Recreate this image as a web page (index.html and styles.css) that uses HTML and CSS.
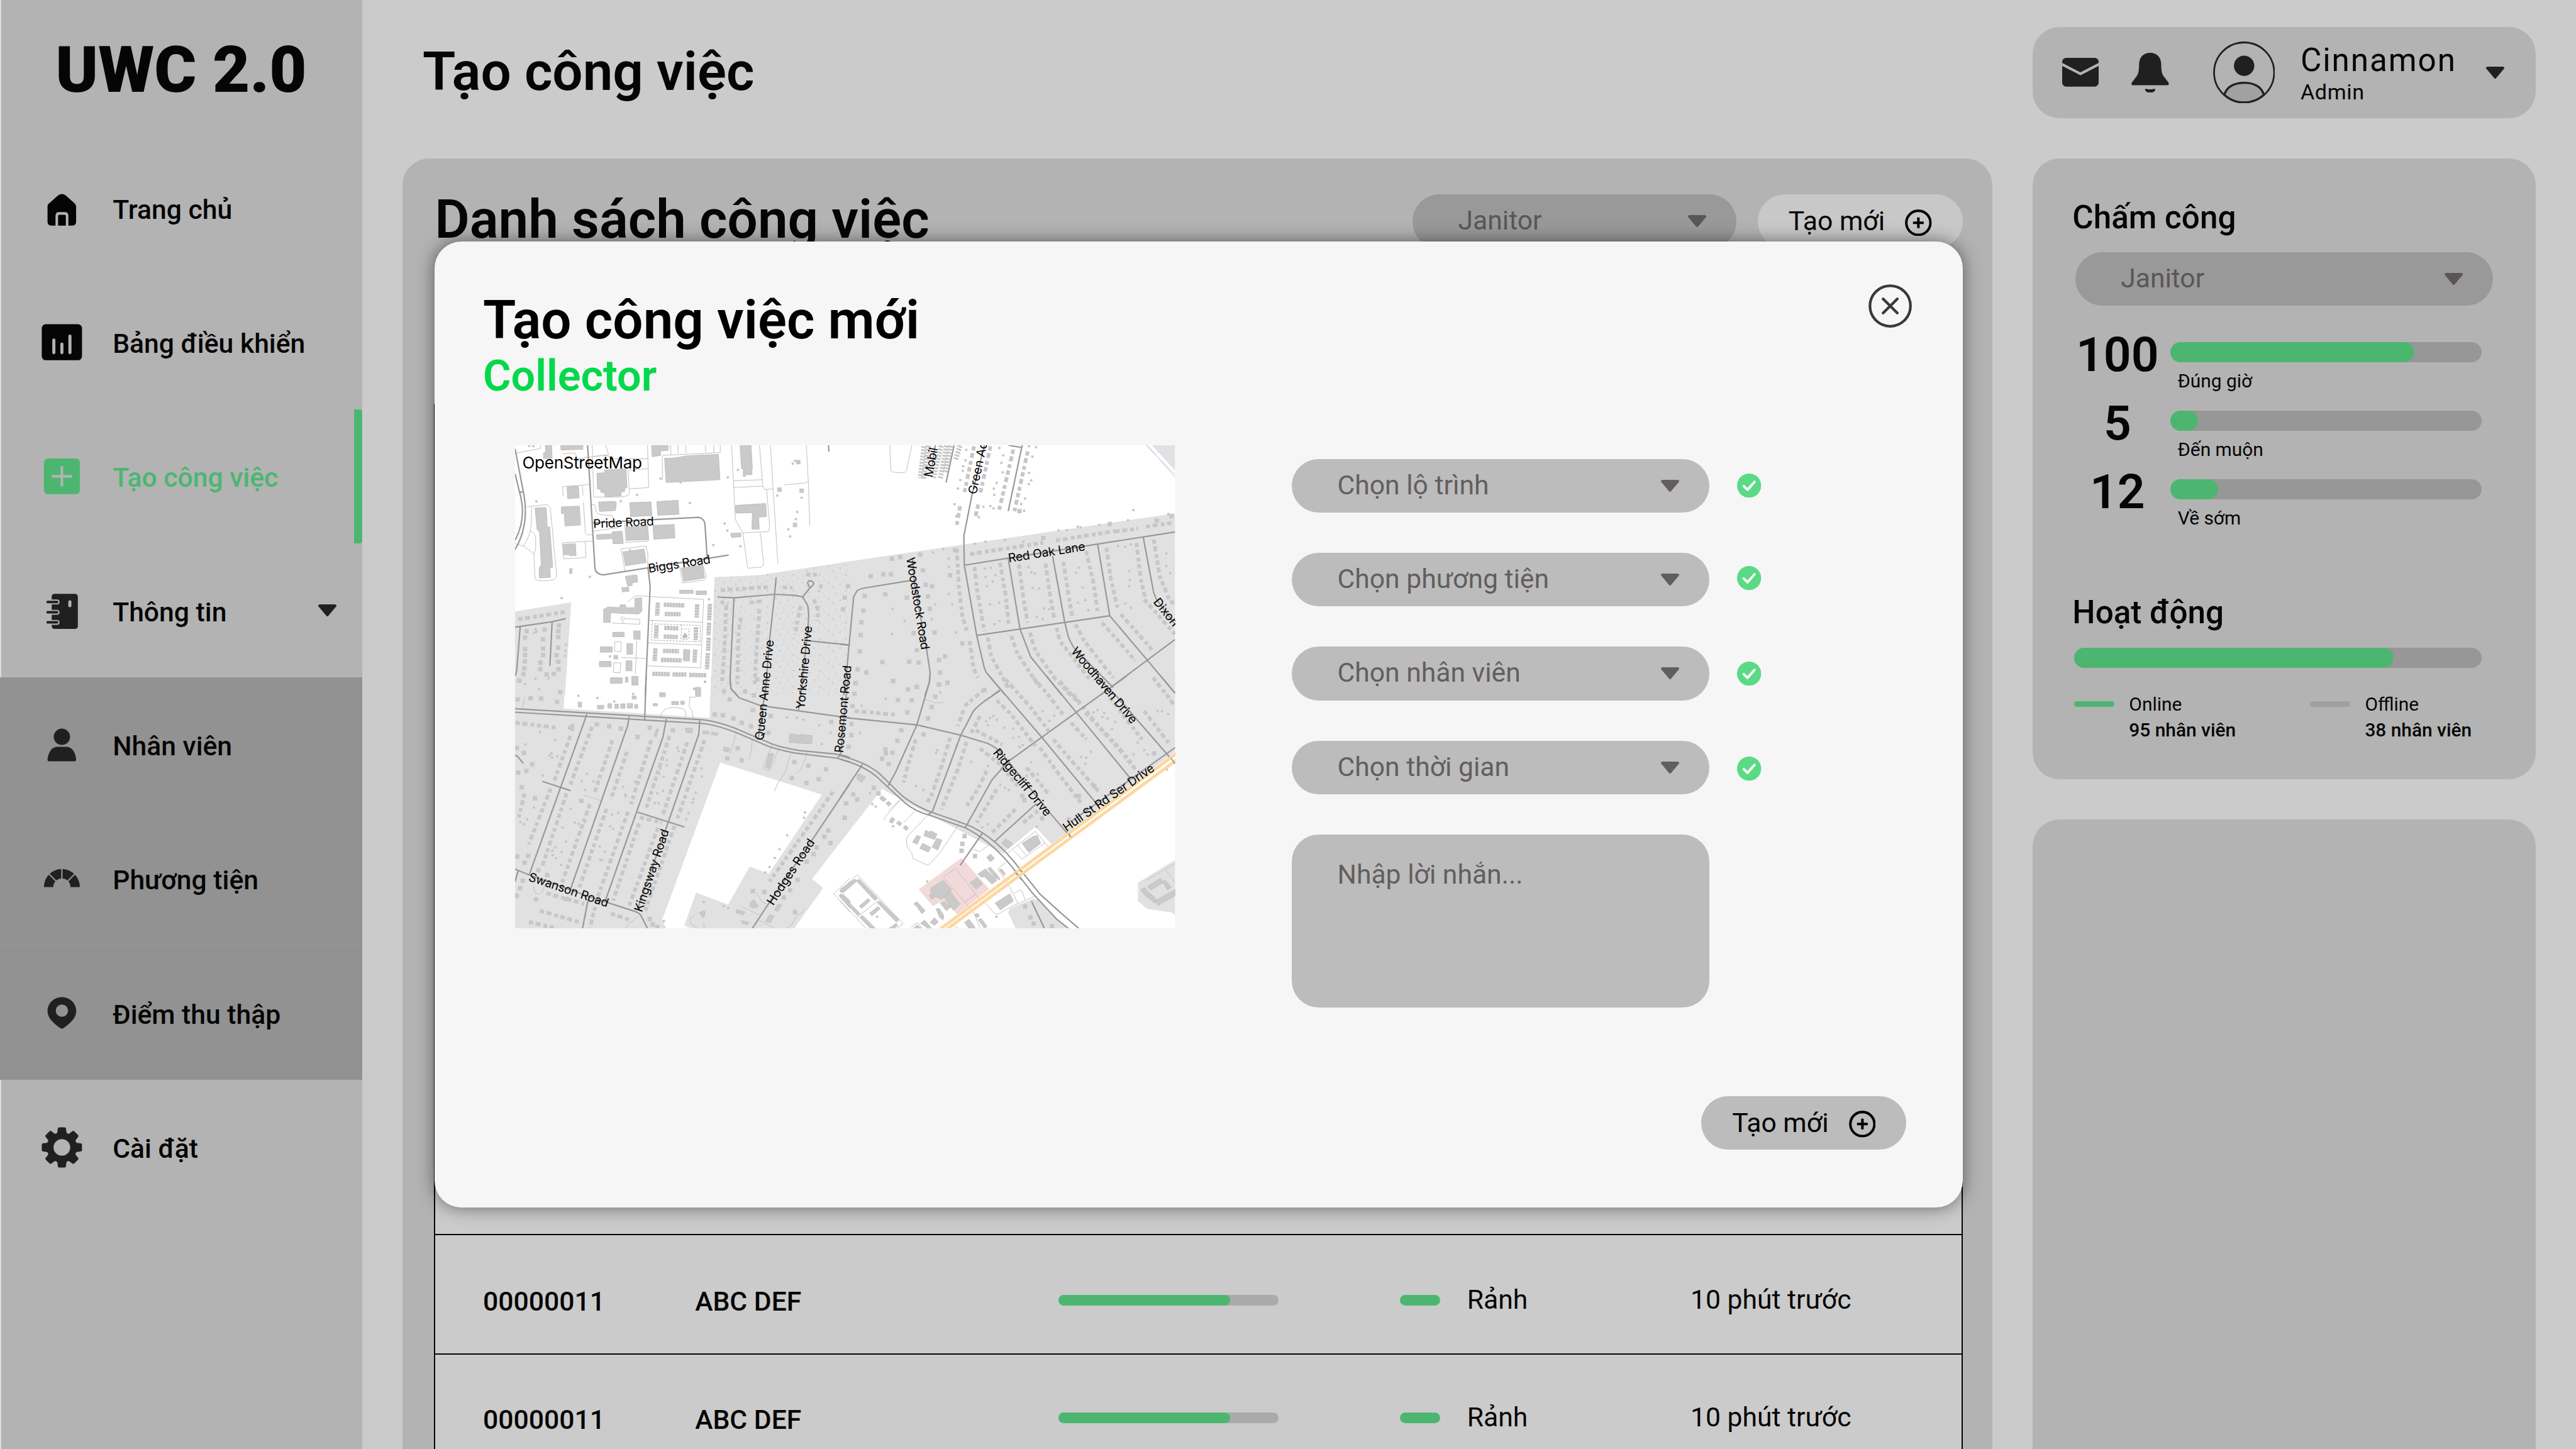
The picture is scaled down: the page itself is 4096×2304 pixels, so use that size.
FILE: index.html
```html
<!DOCTYPE html>
<html lang="vi">
<head>
<meta charset="utf-8">
<title>UWC 2.0 – Tạo công việc</title>
<link rel="stylesheet" href="styles.css">
</head>
<body>
<svg class="defs" aria-hidden="true">
  <symbol id="caret" viewBox="0 0 13.6 9"><path d="M1 0h11.6q1.4.3.8 1.5L7.5 8.6q-.7.7-1.4 0L.2 1.5Q-.4.3 1 0z"/></symbol>
  <symbol id="plus-circle" viewBox="0 0 20 20"><path d="M10 1a9 9 0 1 0 0 18a9 9 0 1 0 0-18zM10 6v8M6 10h8" fill="none" stroke="currentColor" stroke-width="1.9"/></symbol>
  <symbol id="check" viewBox="0 0 18 18"><circle cx="9" cy="9" r="9"/><path d="M5 9.3l2.8 2.8L13 6.2" fill="none" stroke="#f6f6f6" stroke-width="1.9" stroke-linecap="round" stroke-linejoin="round"/></symbol>
</svg>

<div class="app">
  <aside class="sidebar">
    <div class="logo">UWC 2.0</div>
    <nav>
      <a class="nav-item">
        <svg class="nav-icon ink" viewBox="0 0 36 36"><path d="M10 31.3q-2.7 0-2.7-3V17q0-1.6 1.4-2.5l6.3-5.6q3-2.3 6 0l6.3 5.6q1.3 1 1.3 2.5v11.3q0 3-2.7 3z"/><path class="cut-line" d="M14.2 31.6V24q0-1.8 1.8-1.8h4q1.9 0 1.9 1.8v7.6"/></svg>
        <span>Trang chủ</span>
      </a>
      <a class="nav-item">
        <svg class="nav-icon ink" viewBox="0 0 36 36"><rect x="3" y="4.5" width="30" height="26.8" rx="3"/><path class="cut-bar" d="M12 16.3v9.4M18 19.3v6.4M24 13.3v12.4"/></svg>
        <span>Bảng điều khiển</span>
      </a>
      <a class="nav-item active">
        <svg class="nav-icon" viewBox="0 0 36 36"><rect x="4.6" y="4.7" width="26.8" height="26.6" rx="3"/><path class="cut-line" d="M18 10.4v15.2M10.4 18h15.2"/></svg>
        <span>Tạo công việc</span>
      </a>
      <a class="nav-item">
        <svg class="nav-icon" viewBox="0 0 36 36"><rect x="10.4" y="5.8" width="19.5" height="26.1" rx="2"/><path class="ring-gap" d="M7.4 11.8h7M7.4 19.5h7M7.4 27h7"/><path class="ring" d="M7.4 11.8h7M7.4 19.5h7M7.4 27h7"/><rect class="cut" x="22.8" y="10.6" width="2.3" height="5.1" rx="1.1"/></svg>
        <span>Thông tin</span>
        <svg class="caret"><use href="#caret"/></svg>
      </a>
      <div class="submenu">
        <a class="nav-item">
          <svg class="nav-icon" viewBox="0 0 36 36"><circle cx="18" cy="12" r="6.1"/><path d="M8.6 30.2q-1.5 0-1.3-1.6Q8.6 19.4 15 19.4h6q6.4 0 7.6 9.2.2 1.6-1.2 1.6z"/></svg>
          <span>Nhân viên</span>
        </a>
        <a class="nav-item">
          <svg class="nav-icon" viewBox="0 0 36 36"><path d="M4.6 24.1A13.4 13.4 0 0 1 31.4 24.1H24.4A6.4 6.4 0 0 0 11.6 24.1z"/><path class="gap-dark" d="M18 10v9M8.2 14.2l5.8 5.8M27.8 14.2l-5.8 5.8"/></svg>
          <span>Phương tiện</span>
        </a>
        <a class="nav-item">
          <svg class="nav-icon" viewBox="0 0 36 36"><path fill-rule="evenodd" d="M18 6.3c6 0 10.7 4.6 10.7 10.4 0 5.300-4.700 9.300-9.700 12.800q-1 .6-2 0c-5-3.500-9.700-7.500-9.700-12.800C7.300 10.900 12 6.300 18 6.300zm0 5.500a4.600 4.600 0 1 0 0 9.200a4.600 4.600 0 1 0 0-9.200z"/></svg>
          <span>Điểm thu thập</span>
        </a>
      </div>
      <a class="nav-item">
        <svg class="nav-icon" viewBox="0 0 36 36">
          <circle cx="18" cy="18" r="8.7" fill="none" stroke="currentColor" stroke-width="5"/>
          <g id="teeth"><path d="M13.600 8.400l1-1.600.4-3q.1-.8 1-.8h4q.9 0 1 .8l.4 3 1 1.600zM13.600 27.600l1 1.600.4 3q.1.8 1 .8h4q.9 0 1-.8l.4-3 1-1.600z"/></g>
          <use href="#teeth" transform="rotate(45 18 18)"/><use href="#teeth" transform="rotate(90 18 18)"/><use href="#teeth" transform="rotate(135 18 18)"/>
        </svg>
        <span>Cài đặt</span>
      </a>
    </nav>
  </aside>

  <main class="main">
    <h1 class="page-title">Tạo công việc</h1>
    <section class="panel">
      <header class="panel-head">
        <h2>Danh sách công việc</h2>
        <div class="select dark short"><span>Janitor</span><svg class="caret"><use href="#caret"/></svg></div>
        <button class="btn light"><span>Tạo mới</span><svg><use href="#plus-circle"/></svg></button>
      </header>
      <div class="table">
        <div class="row">
          <b>00000011</b><b>ABC DEF</b>
          <div class="bar thin"><i style="width:78%"></i></div>
          <div class="status"><i></i><span>Rảnh</span></div>
          <span class="time">10 phút trước</span>
        </div>
        <div class="row last">
          <b>00000011</b><b>ABC DEF</b>
          <div class="bar thin"><i style="width:78%"></i></div>
          <div class="status"><i></i><span>Rảnh</span></div>
          <span class="time">10 phút trước</span>
        </div>
      </div>
    </section>
  </main>

  <div class="rail">
    <section class="card user">
      <svg class="mail" viewBox="0 0 27.200 21.400"><rect width="27.200" height="21.400" rx="3"/><path class="cut-line" d="M-.5 4.600l14.100 7.300 14.100-7.300"/></svg>
      <svg class="bell" viewBox="0 0 28 29.700"><path d="M14 0c5 0 8 3.200 8.200 8 .2 5 .3 7.300 1.800 9.400l3.700 4.900q.8 1.600-.9 1.900H1.200q-1.700-.3-.9-1.900L4 17.400c1.500-2.100 1.600-4.400 1.800-9.400C6 3.200 9 0 14 0zM10.200 27.600q0-1.200 1.300-.7 2.500.6 5 0 1.300-.5 1.300.7-.6 2.100-3.800 2.100t-3.800-2.100z"/></svg>
      <svg class="avatar" viewBox="0 0 46.200 46.200"><path d="M8.400 39.800C10 33.500 16 30.800 23.100 30.800s13.100 2.700 14.700 9A22 22 0 0 1 8.400 39.800z" fill="#9fa2a1" stroke="#202020" stroke-width="1.500"/><circle cx="23.100" cy="23.100" r="22.400" fill="none" stroke="#202020" stroke-width="1.300"/><circle cx="23.100" cy="18.100" r="7.600"/></svg>
      <div class="who"><div class="name">Cinnamon</div><div class="role">Admin</div></div>
      <svg class="caret"><use href="#caret"/></svg>
    </section>
    <section class="card stats">
      <h3>Chấm công</h3>
      <div class="select dark"><span>Janitor</span><svg class="caret"><use href="#caret"/></svg></div>
      <div class="counts">
        <div class="count"><strong>100</strong><div><div class="bar"><i style="width:78.400%"></i></div><p>Đúng giờ</p></div></div>
        <div class="count"><strong>5</strong><div><div class="bar"><i style="width:8.900%"></i></div><p>Đến muộn</p></div></div>
        <div class="count"><strong>12</strong><div><div class="bar"><i style="width:15.300%"></i></div><p>Về sớm</p></div></div>
      </div>
      <h3>Hoạt động</h3>
      <div class="bar activity"><i style="width:78.300%"></i></div>
      <div class="legend">
        <div><i class="on"></i><p>Online<br><b>95 nhân viên</b></p></div>
        <div><i></i><p>Offline<br><b>38 nhân viên</b></p></div>
      </div>
    </section>
    <section class="card blank"></section>
  </div>
</div>

<div class="modal">
  <header class="modal-head">
    <div><h2>Tạo công việc mới</h2><p>Collector</p></div>
    <svg class="close" viewBox="0 0 32.400 32.400"><path d="M16.200 1.100a15.100 15.100 0 1 0 0 30.200a15.100 15.100 0 1 0 0-30.200zM10.900 10.900l10.600 10.600M21.500 10.900L10.900 21.500" fill="none" stroke="#38393b" stroke-width="2" stroke-linecap="round"/></svg>
  </header>
  <div class="modal-body">
    <svg class="map" viewBox="0 0 1366.700 1000" preserveAspectRatio="none">
      <defs>
        <pattern id="lots" width="118" height="96" patternUnits="userSpaceOnUse">
          <path class="lot" d="M8 12h6v7h-6zM34 5h4v4h-4zM51 22h9v7h-9zM83 10h5v6h-5zM104 31h8v8h-8zM20 42h5v4h-5zM41 55h4v5h-4zM70 47h8v9h-8zM93 62h4v4h-4zM11 71h9v8h-9zM58 80h5v5h-5zM86 84h7v6h-7zM30 87h4v4h-4zM112 78h3v4h-3zM66 70h3v3h-3z"/>
        </pattern>
      </defs>
      <rect width="1366.700" height="1000" fill="#fff"/>

      <!-- residential ground -->
      <g id="ground">
        <g transform="translate(-26.600 -22) scale(.4592 .3444)"><path d="M58 1063L311 1008 283 1568H58zM957 857L1150 846 1568 762V1568H940z"/></g>
        <g transform="translate(673.400 -22) scale(.4592 .3444)"><path d="M0 770L1509 473V1568H0zM1405 64H1509V215z"/></g>
        <g transform="translate(-26.600 478) scale(.4592 .3444)"><path fill-rule="evenodd" d="M58 0H286L277 195 935 250 941 0H1568V925L1397 1219 1447 1274 1317 1516H850L821 1500 874 1301 1018 1374 1116 1144 1202 1188 1442 712 983 519 721 1465 740 1516H58z"/></g>
        <g transform="translate(673.400 478) scale(.4592 .3444)"><path d="M0 0H1509V455L952 1010 880 905 733 1067 188 679 0 999zM756 1420L765 1395 870 1338 890 1345 1020 1516H790zM1342 1242L1509 1105V1440L1495 1420 1384 1399 1342 1352z"/></g>
      </g>

      <!-- north-west quarter -->
      <g transform="translate(-26.600 -22) scale(.4592 .3444)">
        <path fill="url(#lots)" d="M957 857L1150 846 1568 762V1568H940z"/>
        <path class="parcel" d="M58 112L173 84V64M273 115L328 110 340 145 480 120 467 64M406 64L412 375H530Q574 372 574 350L567 215 660 204M410 130L470 125 505 145 658 145M655 64L661 318 575 326M275 368L273 312 395 300M361 305L365 365M722 270L722 125 983 108V64M760 64V120M793 64V115M827 64L829 112M917 64V108M954 64V108M1034 64L1051 510 1085 590 1200 583Q1206 570 1205 540L1192 330M1160 64L1175 310 1185 330 1220 326M1042 278L1172 271M1044 318L1175 309M1209 64L1243 776M1085 592L1107 803 1170 796Q1178 790 1178 770L1164 590M1272 302L1365 290 1380 280 1371 64M1380 280L1387 548M112 433L200 421Q216 425 218 455L245 840Q245 875 215 877L165 878Q147 876 147 850L143 718 100 672 58 655M126 580Q150 590 151 620V690L143 718M132 433V530Q125 620 93 675M366 408L375 590 385 602H410M403 420L418 421 424 465Q430 482 460 483L495 488 520 560 410 580M272 650L408 640M272 650L278 747 378 738 374 644M552 530L558 648 655 641Q661 640 660 620L655 545M535 687L649 670 657 720 655 795M535 687L554 820M800 790L813 892 910 875Q920 870 919 850L905 785M565 1008Q590 970 615 968L662 973 908 990 895 1402 655 1390M662 1116L903 1128M659 1252L898 1264M495 1133L620 1140V1110L555 1106M543 1116V1136M536 1340L650 1345M607 1240L600 1440M508 1245H537L534 1305 506 1302zM503 1372H535L531 1432 502 1430z"/>
        <path class="parcel dash" d="M677 1118L672 1235 893 1246V1148L677 1137M808 1143L806 1240M808 1168H843L841 1230H808"/>
        <path class="building" d="M194 64H223L225 143H186V108H196zM264 64H364V88L265 93zM673 64H748V95L714 98V125L676 133zM732 142L776 140 830 128 880 124 975 119 982 271 739 288zM1072 64H1122L1128 203H1126V240L1097 241V251H1087V206H1079zM427 232L461 229V212L558 206 563 318 552 325V342L536 345V368L463 374V352L444 346V330L429 326zM292 315L344 310 347 380 295 385zM266 434L348 430 353 543 283 549 280 475H267zM148 441L198 438 203 555H214L228 797 215 800 217 858 168 862 166 803 176 780 168 585 157 570zM434 405L508 401 515 410 510 456 439 462zM575 409L671 404 675 487 579 493zM697 402L793 395 797 479 701 485zM425 602L496 597V584L541 581 546 654 499 656V625L427 630zM558 556L655 548 660 631 561 636zM680 546L775 540 779 621 683 629zM273 659L330 656 333 727 304 728V722H275zM544 705L573 700 576 687 583 698 640 687 649 770 556 788zM808 802L903 783 912 862 818 882zM555 852L607 843 611 886 586 890V907L566 911zM538 920L569 917 572 941 543 946zM1051 425L1188 414 1192 492 1156 496 1159 568H1126V548L1128 469 1054 472zM1030 594L1076 590V614L1034 618zM304 805H315V835H304zM457 1050L477 1036 531 1040V1023H557V1040L598 1040V985L628 980 630 1060 615 1078 540 1075 489 1070 487 1130 457 1128zM498 1188H550V1215H498zM592 1180H622V1230H594zM442 1276H496V1308H442zM562 1256H588V1320H562zM438 1363H491V1395H438zM558 1360H585V1420H558zM488 1462H540V1494H488zM584 1453H612V1505H585zM555 1458H567V1488H555zM818 1292L846 1294 844 1361 817 1360zM872 1521H894V1568H872zM710 1552H735V1568H710zM800 935H861V955H800zM874 940H921V962H874z"/>
        <path class="terrace" d="M728 1022L822 1027M733 1078L804 1080M731 1162L795 1165M728 1214L793 1217M725 1300L797 1302M716 1354L810 1357M677 1438L757 1440M768 1442L830 1442M843 1444L921 1447M702 1010L698 1088M879 1020L877 1100M696 1146L693 1224M874 1157L872 1236M691 1284L687 1362M870 1292L867 1370M937 1018L933 1116M933 1130L930 1207M931 1220L928 1300M927 1313L923 1410"/>
        <circle class="parcel" cx="543" cy="1105" r="9"/>
        <path class="pool" d="M812 1215L824 1190 837 1212 830 1224H815z"/>
        <path class="dot" d="M154 401h0M608 363h0M714 264h0M804 287h0M535 400h0M846 411h0M1017 257h0M1063 212h0M1003 535h0M1015 577h0M952 664h0M1074 671h0M395 855h0M268 983h0M932 990h0M1350 380h0M1330 465h0M1324 508h0M1290 570h0M1298 612h0M486 1333h0M915 1486h0M866 1529h0M1310 174h0M1320 157h0M122 68h0M141 70h0M1240 366h0M145 1190h0M155 1185h0M150 1170h0M285 1300h0M283 1330h0M288 1262h0M165 1530h0M103 1500h0M150 1467h0M210 1465h0"/>
        <path class="house" d="M1335 165h0M1250 330h0M1350 337h0M1320 543h0M512 1338h0M110 1182h0M191 1172h0M184 1230h0M184 1285h0M184 1325h0M172 1370h0M172 1410h0M200 1442h0M232 1438h0M254 1410h0M253 1365h0M245 1327h0M252 1280h0M253 1217h0M253 1182h0M256 1147h0M103 1220h0M103 1290h0M103 1325h0M102 1363h0M99 1405h0M96 1440h0M77 1478h0"/>
        <path class="row-h" d="M72 1110L292 1064M985 935L1210 915M1265 918L1310 920M985 1000L1010 1025 1005 1190 1000 1330 990 1500M1075 1100L1065 1200 1060 1500M1115 1010L1175 1000M1160 1050L1145 1330 1138 1500M1405 990L1425 1060 1420 1120M1345 1030L1330 1130 1320 1200M1440 900L1425 945M1370 842L1420 842"/>
        <path class="road" d="M58 85L95 343Q125 540 58 690M58 235L78 345Q112 500 58 635M78 345H95M385 64L418 805Q423 840 455 843L1021 724M408 530L885 497Q912 503 914 540L924 738M657 800L667 910 645 1568M58 1157L225 1125 287 1106M225 1125L215 1390M81 1155L66 1410Q63 1440 58 1450M970 976L1045 981 1228 960 1312 965 1355 975 1378 1030 1382 1085 1378 1170 1345 1568M1355 975L1388 920Q1370 890 1382 880 1400 876 1405 895 1400 910 1388 920M1235 858L1228 960 1205 1240 1185 1568M1045 981L1027 1470 1031 1527 1060 1568M1393 1241L1568 1265M1471 64L1473 102"/>
      </g>

      <!-- north-east quarter -->
      <g transform="translate(673.400 -22) scale(.4592 .3444)">
        <path class="parcel" d="M223 64L228 215Q230 226 245 226L280 229Q296 232 300 205L323 64"/>
        <path class="creek" d="M1378 64L1509 240M1385 64L1509 255"/>
        <path class="trailer" d="M378 70L360 262M398 66L375 265M455 66L420 262M480 66L450 268M497 66L472 225M540 66L520 152"/>
        <path class="row-h" d="M603 70L560 345M677 70L630 360M780 90L715 460M845 100L785 460M540 430L525 545M622 420L610 490M585 718L915 650M972 636L1240 580M1240 582L1342 566M1378 553L1500 530M525 685L535 920 550 1090 570 1180M583 1240L600 1400 620 1460M605 795L615 920 640 1110 650 1180M720 770L745 960 760 1150M805 780L825 980 845 1130M925 775L945 960 965 1110M1005 765L1025 930 1045 1090M1108 700L1140 880 1160 1060M1200 680L1220 870 1250 1040M1335 650L1355 870 1380 1010M1413 630L1440 850 1480 980 1509 1030M665 1220L680 1330 760 1530M770 1210L800 1320 900 1520M855 1190L880 1300 970 1470 1040 1568M975 1160L990 1240 1130 1480M1060 1140L1100 1240 1230 1460M1180 1130L1240 1220 1330 1360M1265 1080L1410 1300M1370 990L1509 1200"/>
        <path class="house" d="M232 746h0M270 736h0M360 722h0M373 815h0M137 850h0M194 840h0M228 840h0M35 912h0M20 980h0M110 970h0M203 960h0M300 980h0M385 902h0M413 912h0M395 972h0M403 1047h0M104 1058h0M12 1050h0M95 1128h0M92 1205h0M88 1303h0M330 1193h0M425 1190h0M310 1365h0M354 1370h0M345 1295h0M445 1355h0M472 1332h0M450 1430h0M78 1412h0M117 1430h0M190 1367h0M68 1493h0M238 1480h0M345 1516h0M483 1491h0M445 1502h0M517 693h0M495 846h0M808 460h0M915 622h0M1215 537h0M1493 490h0M1427 517h0M650 1535h0M550 1255h0"/>
        <path class="dot" d="M515 418h0M523 490h0M530 324h0M541 273h0M552 218h0M554 190h0M564 155h0M568 91h0M705 290h0M692 325h0M694 362h0M677 430h0M691 443h0M645 433h0M625 497h0M732 226h0M726 170h0M735 124h0M717 80h0M866 132h0M882 75h0M851 70h0M851 230h0M850 297h0M861 275h0M833 384h0M816 417h0M829 458h0M1321 454h0M1297 515h0M1168 543h0M1083 557h0M1070 553h0M984 576h0M1021 573h0M742 634h0M655 643h0M606 656h0M464 688h0M417 708h0M825 645h0M1479 477h0M488 744h0M489 795h0M489 958h0M505 1020h0M427 1020h0M652 806h0M678 800h0M655 857h0M700 845h0M662 912h0M687 883h0M675 1020h0M716 1010h0M695 1140h0M718 1120h0M862 828h0M878 835h0M848 795h0M867 922h0M895 925h0M918 1045h0M940 1050h0M885 1095h0M912 1108h0M1063 830h0M1075 800h0M1092 918h0M1072 1010h0M1105 995h0M1118 1055h0M1252 670h0M1285 675h0M1310 660h0M1303 820h0M1305 875h0M1302 912h0M1285 1015h0M1310 1040h0M1470 715h0M1470 790h0M1487 833h0M232 1198h0M235 1048h0M290 1120h0M412 1110h0M520 1190h0"/>
        <path class="road" d="M820 64L757 460M513 64L477 288M757 64L816 77M428 64L415 180M650 64L594 360 557 608 559 785 615 1207 648 1395Q655 1430 665 1440L745 1568M559 785L755 743 1160 658 1509 585M757 745L810 1168 858 1335 1000 1568M957 730L1012 1128 1028 1215 1038 1245 1055 1285 1230 1520M1160 658L1215 1089 1509 1553M1366 618L1413 950 1425 990 1509 1140M615 1207L1215 1089M1509 1232L1170 1568M320 876L108 922Q80 930 75 940L60 975 30 1400 15 1568M325 740L335 900 390 1300 405 1430 402 1485 382 1568M0 1260L35 1265M718 1537L685 1568"/>
      </g>

      <!-- south-west quarter -->
      <g transform="translate(-26.600 478) scale(.4592 .3444)">
        <path class="parcel" d="M101 130L92 190M713 245Q720 190 770 188 825 190 827 215V250M872 126H846L843 185 855 205 860 253M1055 345L1028 470M1127 385Q1125 470 1111 497M1217 410L1176 550Q1185 570 1208 565L1235 470 1253 425M1300 465L1277 575 1240 650 1227 692M1372 455V475Q1350 570 1327 585M367 714L443 748M143 1260Q140 1310 165 1310 185 1305 190 1260M616 1440L570 1490 560 1516M1145 1300L1170 1355 1190 1370M1080 1386L1165 1440M1155 1465L1228 1516M868 1441Q840 1450 850 1490L880 1516M908 1485L911 1516M1362 1400L1350 1425 1330 1435 1308 1490 1283 1516M1568 1215L1495 1308 1568 1420"/>
        <path class="building" d="M710 103L735 100V124H710zM764 152H795V172H764zM805 150H821V170H805zM680 165H700V178H680zM872 68H894V122H872zM489 10H541V42H489zM584 2H612V52H585zM586 120H604V138H586zM342 156H358V186H342zM429 175H458V197H429zM476 165H493V192H476zM508 168H524V194H508zM534 166H554V193H534zM564 165H588V192H564zM597 170H611V193H597zM1296 346L1342 355 1346 350 1398 358 1395 407 1294 398zM1203 466L1224 468 1205 556 1187 550zM685 360L695 318H705L695 366zM300 300L322 288V328H308V318H297zM826 312L858 315 855 342 828 336zM905 330L932 332V347H905zM945 335L974 345 968 358 942 350zM1000 425L1028 435 1020 455 997 448zM1117 1365L1135 1342 1155 1385 1135 1395 1117 1385zM1243 1370L1260 1375 1243 1415 1228 1405zM1205 1435L1225 1440 1210 1483 1188 1475zM1057 1403L1095 1418 1085 1435 1055 1422zM1078 1470L1113 1480 1105 1495 1080 1485zM888 1420L912 1410 914 1440 905 1452zM1568 1245L1540 1300 1522 1292 1568 1240zM1518 1320L1535 1310 1568 1350V1395z"/>
        <path class="row-h" d="M60 280L245 310M307 360L235 628M218 675L120 1010M405 305L305 660M290 705L180 1145M497 385L415 705M395 770L270 1240M562 455L490 740M470 798L345 1280M672 385L580 770M567 815L430 1330 395 1516M754 360L650 790M617 885L500 1350M834 398L725 830M702 910L570 1390M912 385L880 510 790 855M777 900L645 1410M1492 695L1205 1235M170 1410L350 1480M120 1478L245 1516M200 1305L370 1370M490 1428L575 1465M620 850L720 880M100 705L75 850"/>
        <path class="house" d="M77 28h0M70 140h0M128 133h0M175 135h0M247 155h0M262 97h0M427 290h0M482 302h0M535 315h0M610 365h0M665 310h0M770 325h0M135 530h0M109 570h0M72 580h0M88 668h0M148 735h0M117 1080h0M101 1122h0M68 1085h0M97 462h0M66 432h0M357 750h0M163 1167h0M203 1195h0M152 1342h0M80 1275h0M93 1230h0M66 1320h0M288 1340h0M1062 433h0M1080 506h0M1015 495h0M1318 517h0M1380 538h0M1460 560h0M1306 612h0M1427 620h0M1372 642h0M1484 275h0M1130 205h0M1042 255h0M995 235h0M958 230h0M1080 280h0M1122 302h0M1210 240h0M1200 340h0M1550 765h0M1544 850h0M1470 928h0M1452 965h0M1480 1003h0M1418 1030h0M1403 1070h0M1372 1115h0M1332 1225h0M1298 1287h0M1270 1330h0M1320 1418h0M1182 1297h0M1130 1293h0M665 1460h0M678 1492h0M700 1508h0M1000 90h0M1025 140h0M1095 92h0M1135 115h0M1150 20h0"/>
        <path class="dot" d="M1365 819h0M1361 851h0M1285 957h0M1250 1040h0M1229 1093h0M1205 1147h0M1186 1180h0M429 131h0M343 118h0M505 153h0M590 107h0M866 76h0M915 33h0M908 1359h0M998 1381h0M1019 1395h0M729 1472h0M170 337h0M240 383h0M104 411h0M182 597h0M222 465h0M225 490h0M213 478h0M248 483h0M358 630h0M382 587h0M412 633h0M373 683h0M143 790h0M97 890h0M112 862h0M82 878h0M328 880h0M308 798h0M345 888h0M372 877h0M272 910h0M288 995h0M240 1030h0M226 1050h0M268 1058h0M228 1076h0M243 1095h0M265 1135h0M487 903h0M500 918h0M495 832h0M523 822h0M440 1025h0M462 1055h0M441 1102h0M450 1107h0M555 712h0M557 722h0M598 635h0M545 665h0M742 505h0M742 535h0M712 555h0M728 605h0M708 587h0M725 690h0M700 705h0M688 762h0M705 764h0M790 430h0M795 450h0M898 555h0M900 603h0M872 700h0M862 738h0M858 760h0M840 825h0M830 860h0M1283 248h0M1328 250h0M1358 262h0M1430 295h0M1480 340h0M1440 408h0"/>
        <path class="road" d="M649 0L642 268M1195 0L1155 370M1358 0L1335 210M1027 0L1031 75 1068 130 1165 177 1520 243 1568 250M1560 0L1525 470 1513 490M58 196L900 262Q960 268 1050 313L1215 407Q1260 430 1340 447L1500 468Q1540 475 1568 490M58 217L910 285Q970 295 1060 342L1200 422Q1250 445 1320 462L1510 493 1568 517M382 228L122 1193M573 243L565 300 308 1280M740 257L725 365 465 1350M891 262L886 350 748 880 610 1400M181 633L308 688M610 818L822 907M58 475L70 483 95 525M58 1160L122 1195 390 1325 600 1415Q620 1425 625 1438L655 1516M72 1170L58 1235M388 1340L362 1516M1568 645L1395 990 1200 1370 1128 1516"/>
      </g>

      <!-- south-east quarter -->
      <g transform="translate(673.400 478) scale(.4592 .3444)">
        <path class="pink" d="M546 1092L672 1280 527 1432 468 1345 418 1383 353 1282z"/>
        <path class="parcel" d="M381 139L428 160H465M275 738L197 855Q197 862 202 865M268 745L217 808M340 805L287 880M397 832L320 940Q298 960 298 1000 300 1035 322 1060L326 1095 390 1135Q400 1138 408 1122L450 1060 540 880M600 1040L630 1055 668 1015M752 1065L880 933 940 1030M800 1017L840 1080M780 1045L820 1100 922 1003M520 1155L465 1208 605 1430 630 1516M520 1155L625 1335M560 1358L612 1310M745 1120L710 1160 765 1270 800 1365M655 1365L685 1410Q700 1440 715 1428L770 1385 875 1325M785 1305L810 1285Q820 1285 832 1345M0 1290L76 1193 180 1340 72 1453 0 1350M72 1453L115 1516M180 1340L283 1488 255 1516M320 1516Q340 1475 355 1490L370 1516M500 1484L530 1516M1380 1228L1509 1127M1465 1162L1509 1240"/>
        <path class="building" d="M76 592L90 588 115 608 95 640 75 618zM385 925L397 937 412 932 436 950 425 983 405 972 377 960zM345 958L362 965 347 1010 326 998zM435 975L458 985 440 1045 413 1028zM372 1005L408 1030 397 1057 358 1035zM745 977L777 1005 757 1036 727 1005zM820 1005L870 963 888 957 903 1005 850 1060zM660 1090L677 1070 695 1095 677 1116zM620 1190L655 1158 705 1230 683 1250 650 1205 638 1210zM665 1157L677 1149 715 1207 702 1222zM717 1165L727 1158 745 1190 737 1197zM585 1242L617 1212 642 1250 612 1280zM408 1275L465 1227 503 1285 455 1342 430 1325 412 1342 400 1318 410 1308zM466 1325L497 1297 540 1370 510 1408zM451 1365L468 1350 498 1388 478 1410zM698 1365L753 1318 765 1310 780 1352 722 1405zM0 1280L65 1220 75 1232 15 1300 0 1298zM72 1230L86 1220 169 1335 155 1348zM0 1308L90 1428 77 1438 0 1325zM85 1382L125 1338 135 1350 97 1395zM166 1360L181 1353 265 1465 252 1478zM88 1450L100 1438 158 1516H135zM132 1425L170 1385 180 1398 143 1441zM220 1516L252 1485 258 1500 245 1516zM331 1370L345 1355 383 1410 368 1428 345 1385zM362 1485L380 1467 412 1516H395zM405 1480L425 1452 442 1478 425 1498zM432 1400L445 1395 467 1440 463 1465 448 1450zM330 1516L347 1495 365 1516zM560 1480L580 1462 608 1510 600 1516H580zM605 1435L618 1425 628 1440 615 1452zM622 1465L635 1457 662 1505 650 1516zM1385 1265L1445 1215 1457 1240 1400 1287zM1453 1235L1465 1228 1492 1270 1475 1285zM1354 1283L1372 1270 1398 1310 1380 1328zM1385 1328L1400 1308 1425 1345 1417 1365zM1420 1350L1509 1283V1320L1432 1378zM176 735L188 718 208 740 195 755zM205 765L218 752 230 768 218 783zM220 875L232 848 246 860 234 885zM253 885L263 870 278 885 268 900zM283 912L293 897 308 912 298 928z"/>
        <path class="row-h" d="M745 20L860 190 940 330M870 10L930 100 1010 240M705 145L770 230 880 420M990 30L1080 170M1050 110L1175 320 1270 460 1330 560M1105 220L1250 420 1310 520M1215 130L1250 190 1360 380M1370 210L1480 400M1410 10L1470 110 1509 180M900 430L980 580 1090 770M960 380L1050 520 1170 700M1040 280L1110 380M555 205L530 300M650 80L560 180M630 240L590 340M495 370L460 530 410 720 385 770M570 395L530 560 490 690 455 800M660 570L620 680 570 780M705 680L660 780 615 880M340 380L300 560 285 640M630 435L710 520 800 660M840 550L940 710M65 210L250 232M610 325L730 410M825 880L900 800M685 940L790 800"/>
        <path class="house" d="M68 42h0M64 105h0M237 30h0M345 65h0M483 40h0M445 50h0M428 123h0M412 186h0M302 217h0M395 255h0M375 350h0M257 388h0M235 460h0M203 440h0M205 465h0M218 528h0M188 497h0M275 325h0M50 287h0M50 354h0M38 425h0M55 180h0M322 145h0M260 143h0M306 80h0M820 720h0M830 745h0M1030 862h0M910 855h0M560 962h0M550 1008h0M547 1050h0M607 1082h0M151 672h0M172 705h0M58 710h0M76 742h0M27 765h0M20 852h0M833 1385h0M857 1450h0M872 1487h0M955 1502h0M1415 465h0M1145 660h0M1075 720h0"/>
        <path class="dot" d="M238 902h0M160 784h0M144 769h0M133 704h0M392 1234h0M166 1447h0M704 1447h0M715 1219h0M1473 562h0M90 342h0M97 178h0M204 137h0M450 98h0M657 272h0M675 252h0M690 240h0M706 262h0M665 295h0M740 310h0M780 315h0M805 365h0M780 370h0M822 415h0M808 425h0M912 210h0M942 270h0M965 238h0M1142 218h0M1160 205h0M1190 222h0M1205 255h0M1182 245h0M1240 275h0M1225 318h0M1085 485h0M1108 490h0M1130 455h0M1105 525h0M1340 400h0M1322 470h0M1370 445h0M1385 470h0M860 518h0M840 600h0M890 590h0M720 655h0M742 670h0M760 685h0M432 460h0M437 445h0M665 540h0M525 420h0M342 660h0M375 683h0M590 515h0M640 910h0M665 890h0M885 905h0M1450 210h0M1430 208h0M1478 228h0"/>
        <path class="road" d="M672 0L910 370 1160 775M930 0L1305 610M1155 0L1245 120 1490 495M1445 0L1509 103M1290 0L755 515 683 625 563 912M720 87L650 150Q610 190 598 215L543 355 415 815 397 832M403 0L402 35 345 293 250 575 215 660M0 247L345 293 543 355 662 403Q700 425 725 460L950 830 1040 970M100 530L0 730M0 478Q120 520 180 590L275 715Q340 785 420 822L565 890Q680 950 780 1110L900 1310 1000 1430 1075 1516M0 500Q100 535 160 600L290 760Q340 815 400 835L560 910Q670 980 770 1140L870 1310 975 1460 1028 1516M640 945L540 1138M695 995L885 765M1509 430L1045 870M862 1353L920 1516"/>
        <path class="highway" d="M1515 465L450 1521M1515 505L480 1521"/>
        <path class="road faint" d="M790 1180L800 1197M808 1210L818 1225M808 1163L818 1176M1030 945L1040 968M1490 492L1509 527"/>
      </g>

      <g class="labels">
        <text class="brand" x="15" y="47.900" textLength="248">OpenStreetMap</text>
        <text transform="translate(162 171.500) rotate(-2.600)" textLength="126">Pride Road</text>
        <text transform="translate(277 264) rotate(-8.900)" textLength="130">Biggs Road</text>
        <text transform="translate(514.300 611.600) rotate(-84.100)" textLength="209">Queen Anne Drive</text>
        <text transform="translate(599.300 547) rotate(-84.800)" textLength="173">Yorkshire Drive</text>
        <text transform="translate(679.200 637.500) rotate(-84.600)" textLength="182">Rosemont Road</text>
        <text transform="translate(810 233.600) rotate(80.800)" textLength="193">Woodstock Road</text>
        <text transform="translate(955 102.700) rotate(-78)">Green Ac</text>
        <text transform="translate(864 67.500) rotate(-79.500)" textLength="62">Mobil</text>
        <text transform="translate(1022.500 242.500) rotate(-9)" textLength="161">Red Oak Lane</text>
        <text transform="translate(1320.500 325) rotate(51)">Dixon</text>
        <text transform="translate(1150 427) rotate(50)" textLength="197">Woodhaven Drive</text>
        <text transform="translate(988.500 637) rotate(50.200)" textLength="172.600">Ridgecliff Drive</text>
        <text transform="translate(1141.800 800.700) rotate(-34.900)" textLength="224">Hull St Rd Ser Drive</text>
        <text transform="translate(534.500 954) rotate(-56.700)" textLength="158">Hodges Road</text>
        <text transform="translate(262.700 967.700) rotate(-71.600)" textLength="178.600">Kingsway Road</text>
        <text transform="translate(26.500 901) rotate(18.700)" textLength="173">Swanson Road</text>
      </g>
    </svg>

    <div class="form">
      <div class="field"><div class="select"><span>Chọn lộ trình</span><svg class="caret"><use href="#caret"/></svg></div><svg class="ok"><use href="#check"/></svg></div>
      <div class="field raised"><div class="select"><span>Chọn phương tiện</span><svg class="caret"><use href="#caret"/></svg></div><svg class="ok"><use href="#check"/></svg></div>
      <div class="field"><div class="select"><span>Chọn nhân viên</span><svg class="caret"><use href="#caret"/></svg></div><svg class="ok"><use href="#check"/></svg></div>
      <div class="field lowered"><div class="select"><span>Chọn thời gian</span><svg class="caret"><use href="#caret"/></svg></div><svg class="ok"><use href="#check"/></svg></div>
      <div class="message">Nhập lời nhắn...</div>
    </div>
  </div>
  <button class="btn submit"><span>Tạo mới</span><svg><use href="#plus-circle"/></svg></button>
</div>
</body>
</html>
```
FILE: styles.css
```css
/* 1rem = 10 units of the 1920-wide layout grid */
html { font-size: calc(100vw / 192); }
* { box-sizing: border-box; margin: 0; padding: 0; }
body {
  height: 100vh;
  overflow: hidden;
  position: relative;
  background: #cbcbcb;
  color: #050505;
  font: 400 2rem/2.4rem Roboto, "Liberation Sans", sans-serif;
}
i { display: block; font-style: normal; }
b { font-weight: 500; }
svg { display: block; flex: none; fill: currentColor; }
.defs { position: absolute; width: 0; height: 0; }
button { border: 0; font: inherit; color: inherit; }

.app {
  display: grid;
  grid-template-columns: 27rem 118.5rem 37.5rem;
  column-gap: 3rem;
  height: 108rem;
  overflow: hidden;
}

/* ---------- sidebar ---------- */
.sidebar { background: linear-gradient(90deg, #dcdcdc .1rem, #b3b3b3 .1rem); }
.logo {
  height: 10.5rem;
  padding-top: 2.42rem;
  text-align: center;
  font-size: 4.8rem;
  line-height: 5.6rem;
  font-weight: 900;
}
.nav-item {
  display: flex;
  align-items: center;
  gap: 2rem;
  height: 10rem;
  padding: 0 1.93rem 0 2.8rem;
  font-weight: 500;
}
.nav-item span { flex: 1; padding-top: .24rem; white-space: nowrap; }
.nav-icon { width: 3.6rem; height: 3.6rem; color: #202020; }
.nav-icon.ink { color: #050505; }
.nav-item .caret { color: #202020; }
.active { color: #4cb671; background: linear-gradient(#4cb671, #4cb671) right / .6rem 100% no-repeat; border-radius: .2rem; }
.active .nav-icon { color: #4cb671; }
.submenu { background: #929292; }
.submenu .nav-item + .nav-item { box-shadow: 0 -1px #999; }
.cut { fill: #b3b3b3; }
.cut-line { fill: none; stroke: #b3b3b3; stroke-width: 1.9; }
.cut-bar { fill: none; stroke: #b3b3b3; stroke-width: 2.3; stroke-linecap: round; }
.gap-dark { fill: none; stroke: #929292; stroke-width: 1; }
.ring-gap { fill: none; stroke: #b3b3b3; stroke-width: 3.7; stroke-linecap: round; }
.ring { fill: none; stroke: #202020; stroke-width: 1.9; stroke-linecap: round; }
.caret { width: 1.36rem; height: .9rem; }

/* ---------- main panel ---------- */
.page-title {
  height: 11.8rem;
  padding: 2.95rem 0 0 1.5rem;
  font-size: 4rem;
  line-height: 4.8rem;
  font-weight: 600;
}
.panel {
  height: 100rem;
  background: #b3b3b3;
  border-radius: 2rem;
  padding-top: 2.7rem;
}
.panel-head { display: flex; padding: 0 2.2rem 0 2.4rem; height: 15.6rem; }
.panel-head h2 { flex: 1; margin-top: -.12rem; font-size: 4rem; line-height: 4rem; font-weight: 600; }
.select {
  display: flex;
  align-items: center;
  justify-content: space-between;
  width: 31.1rem;
  height: 4rem;
  padding: 0 2.22rem 0 3.38rem;
  border-radius: 2rem;
  background: #bcbcbc;
  color: #635e5e;
}
.select span { padding-bottom: .1rem; }
.select.dark { background: #999; color: #5a5656; }
.select.short { width: 24.1rem; margin-right: 1.6rem; }
.btn {
  display: flex;
  align-items: center;
  justify-content: space-between;
  width: 15.3rem;
  height: 4rem;
  padding: 0 2.3rem;
  border-radius: 2rem;
  background: #bcbcbc;
}
.btn svg { width: 2rem; height: 2rem; margin-top: .2rem; }
.btn.light { background: #c8c8c8; }

.table {
  height: 100rem;
  margin: 0 2.2rem 0 2.36rem;
  padding-top: 61.78rem;
  border: .12rem solid #050505;
  background: #cbcbcb;
}
.row {
  display: grid;
  grid-template-columns: 15.8rem 27.1rem 25.45rem 21.65rem 1fr;
  align-items: center;
  height: 8.89rem;
  padding: .87rem 0 0 3.55rem;
  border-top: .14rem solid #050505;
}
.row.last { padding-top: .69rem; }
.row b { padding-top: .22rem; }
.status { display: flex; align-items: center; gap: 2rem; }
.status i { width: 3rem; height: .8rem; border-radius: .4rem; background: #4cb671; }
.status span, .time { padding-bottom: .08rem; }

.bar { height: 1.5rem; border-radius: .75rem; background: #979797; }
.bar i { height: 100%; border-radius: inherit; background: #4cb671; }
.bar.thin { width: 16.4rem; height: .8rem; border-radius: .4rem; background: #aaa; }

/* ---------- right rail ---------- */
.rail { display: flex; flex-direction: column; padding-top: 2rem; }
.card { flex: none; background: #b3b3b3; border-radius: 2rem; }
.user { display: flex; align-items: center; height: 6.8rem; padding: 0 2.33rem 0 2.22rem; color: #202020; }
.mail { width: 2.72rem; height: 2.14rem; margin-right: 2.43rem; }
.bell { width: 2.8rem; height: 2.97rem; margin-right: 3.28rem; }
.avatar { width: 4.62rem; height: 4.62rem; margin-right: 1.9rem; }
.who { flex: 1; padding-top: .13rem; color: #050505; }
.name { font-size: 2.4rem; line-height: 2.8rem; letter-spacing: .09rem; }
.role { font-size: 1.6rem; line-height: 1.9rem; letter-spacing: .03rem; }

.stats { height: 46.3rem; margin: 3rem 0; padding: 3rem 3.2rem 0 2.97rem; }
.stats h3 { font-size: 2.4rem; line-height: 2.8rem; font-weight: 500; }
.stats .select { margin: 1.2rem 0 0 .22rem; }
.counts { margin: 1.88rem 0 4.28rem .2rem; }
.count { display: grid; grid-template-columns: 6.3rem 23.2rem; column-gap: .8rem; height: 5.1rem; }
.count strong { text-align: center; font-size: 3.6rem; line-height: 3.6rem; font-weight: 600; }
.count .bar { margin: .82rem 0 .54rem; }
.count p { padding-left: .55rem; font-size: 1.4rem; line-height: 1.8rem; }
.activity { width: 30.4rem; margin: 1.24rem 0 0 .12rem; }
.legend { display: grid; grid-template-columns: 17.58rem 1fr; margin: 1.78rem -2rem 0 .12rem; font-size: 1.4rem; line-height: 1.9rem; }
.legend div { display: flex; gap: 1.1rem; white-space: nowrap; }
.legend i { flex: none; width: 3rem; height: .4rem; margin-top: .71rem; border-radius: .2rem; background: #a0a0a0; }
.legend .on { background: #4cb671; }
.blank { height: 60rem; }

/* ---------- dialog ---------- */
.modal {
  position: absolute;
  left: 32.4rem;
  top: 18rem;
  width: 113.9rem;
  height: 72rem;
  padding-top: 3.45rem;
  border-radius: 2rem;
  background: #f6f6f6;
  color: #000;
  box-shadow: 0 0 1.3rem rgba(0, 0, 0, .5);
}
.modal-head { display: flex; justify-content: space-between; align-items: flex-start; padding: 0 3.81rem 0 3.6rem; }
.modal-head h2 { font-size: 4rem; line-height: 4.8rem; font-weight: 600; }
.modal-head p { font-size: 3.2rem; line-height: 3.6rem; font-weight: 600; color: #04d84b; }
.close { width: 3.24rem; height: 3.24rem; margin-top: -.25rem; }
.modal-body { display: grid; grid-template-columns: 49.2rem 1fr; column-gap: 8.7rem; align-items: start; padding: 3.35rem 0 0 6rem; }
.form { padding-top: 1rem; }
.field { display: flex; align-items: center; gap: 2.08rem; margin-bottom: 3rem; }
.ok { width: 1.8rem; height: 1.8rem; color: #5ada85; }
.raised .ok { margin-bottom: .2rem; }
.lowered .ok { margin-top: .2rem; }
.message { width: 31.1rem; height: 12.9rem; padding: 1.8rem 3.38rem; border-radius: 2rem; background: #bcbcbc; color: #635e5e; }
.submit { margin: 6.6rem 4.2rem 0 auto; }

/* ---------- map ---------- */
.map { width: 49.2rem; height: 36rem; overflow: hidden; }
.map path, .map circle { vector-effect: non-scaling-stroke; }
#ground { fill: #e1e1e1; }
.lot { fill: #cacaca; }
.building { fill: #cacaca; stroke: #c0c0c0; stroke-width: 1px; }
.terrace { fill: none; stroke: #c4c4c4; stroke-width: 7px; stroke-dasharray: 4px .6px; }
.trailer { fill: none; stroke: #c8c8c8; stroke-width: 8px; stroke-dasharray: 3px 2px; }
.row-h { fill: none; stroke: #c7c7c7; stroke-width: 6px; stroke-dasharray: 7px 4px 8px 5px 6px 4px; }
.house { fill: none; stroke: #c7c7c7; stroke-width: 7px; stroke-linecap: square; }
.dot { fill: none; stroke: #c4c4c4; stroke-width: 3.5px; stroke-linecap: square; }
.parcel { fill: none; stroke: #cbbcbd; stroke-width: 1px; }
.parcel.dash { stroke: #aaa; stroke-dasharray: 3px 2px; }
.pool { fill: #b4bbcc; }
.creek { fill: none; stroke: #b8c8e4; stroke-width: 1px; }
.pink { fill: #f1dad9; }
.road { fill: none; stroke: #989898; stroke-width: 2.2px; stroke-linejoin: round; }
.road.faint { stroke-width: 1.8px; }
.highway { fill: none; stroke: #fdd7a0; stroke-width: 5px; }
.labels { font: 400 25px Inter, "Noto Sans", sans-serif; fill: #000; }
.brand { font-size: 34px; }
```
